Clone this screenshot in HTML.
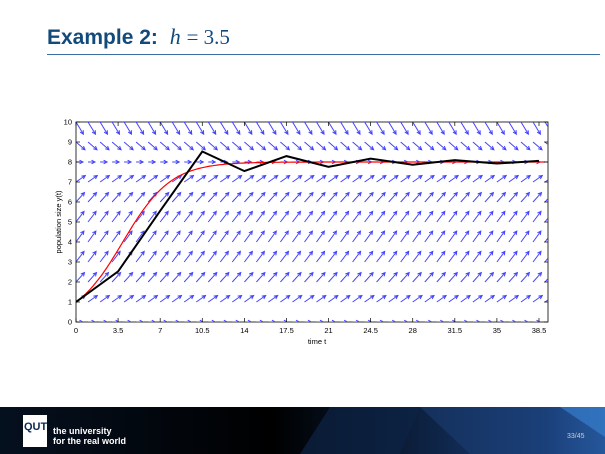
<!DOCTYPE html>
<html><head><meta charset="utf-8"><style>
body{margin:0;width:605px;height:454px;overflow:hidden;background:#fff;font-family:"Liberation Sans",sans-serif;position:relative}
.title{position:absolute;left:47px;top:24px;font-size:21px;font-weight:bold;color:#134a7c}
.title i{font-family:"Liberation Serif",serif;font-weight:normal;font-size:22px;margin-left:6px}
.rule{position:absolute;left:47px;top:54px;width:553px;height:1px;background:#3a6fa0}
.footer{position:absolute;left:0;top:407px;width:605px;height:47px;background:linear-gradient(90deg,#05101f 0%,#000 45%,#0a1a33 65%,#1a3f7a 90%,#2f6fc0 100%);overflow:hidden}
</style></head><body>
<div class="title">Example 2: <i>h</i> <span style="font-family:'Liberation Serif',serif;font-weight:normal">= 3.5</span></div>
<div class="rule"></div>
<svg id="p" width="605" height="454" style="position:absolute;left:0;top:0"></svg>
<div class="footer">
<svg width="605" height="47" style="position:absolute;left:0;top:0">
<polygon points="300,47 330,0 420,0 400,47" fill="#0d2346" opacity="0.7"/>
<polygon points="420,0 605,0 605,47 470,47" fill="#1b3f78" opacity="0.5"/>
<polygon points="560,0 605,0 605,30" fill="#3a86d6" opacity="0.6"/>
<rect x="23" y="8" width="24" height="32" fill="#fff"/>
<text x="24" y="23" font-size="11" font-weight="bold" fill="#0a2a55" font-family="Liberation Sans">QUT</text>
<text x="53" y="27" font-size="9" font-weight="bold" fill="#fff" font-family="Liberation Sans">the university</text>
<text x="53" y="37" font-size="9" font-weight="bold" fill="#fff" font-family="Liberation Sans">for the real world</text>
<text x="567" y="31" font-size="7" fill="#ccc" font-family="Liberation Sans">33/45</text>
</svg></div>
<script>
var s=document.getElementById('p'),h='';
var X0=76,X1=548,Y0=322,Y1=122,sx=(539-76)/38.5,sy=20;
function X(t){return X0+t*sx}function Y(y){return Y0-y*sy}
function f(y){return 0.5*y*(1-y/8)}
h+='<defs><clipPath id="c"><rect x="76" y="122" width="472" height="200"/></clipPath></defs>';
h+='<rect x="76" y="122" width="472" height="200" fill="#fff" stroke="#000" stroke-width="0.8"/>';
var a='';
for(var t=0;t<=39.5;t+=1)for(var y=0;y<=10;y+=1){
 var fv=f(y),af=Math.abs(fv),ratio=1.8*af/(1+0.3*af),len=7+6.5*Math.sqrt(af);
 var ang=Math.atan(ratio),ux=Math.cos(ang),uy=-Math.sin(ang)*(fv<0?-1:1);
 var x0=X(t),y0=Y(y),x1=x0+ux*len,y1=y0+uy*len;
 a+='M'+x0.toFixed(1)+' '+y0.toFixed(1)+'L'+x1.toFixed(1)+' '+y1.toFixed(1);
 var px=-uy,py=ux;
 a+='M'+(x1-ux*3.5+px*1.8).toFixed(1)+' '+(y1-uy*3.5+py*1.8).toFixed(1)+'L'+x1.toFixed(1)+' '+y1.toFixed(1)+'L'+(x1-ux*3.5-px*1.8).toFixed(1)+' '+(y1-uy*3.5-py*1.8).toFixed(1);
}
h+='<path d="'+a+'" stroke="#4444ff" stroke-width="1" fill="none" clip-path="url(#c)"/>';
var r='';for(var t=0;t<=39.2;t+=0.2){var v=8/(1+7*Math.exp(-0.5*t));r+=(t?'L':'M')+X(t).toFixed(1)+' '+Y(v).toFixed(1)}
h+='<path d="'+r+'" stroke="#f00" stroke-width="1.2" fill="none"/>';
var e='',v=1;for(var i=0;i<=11;i++){var t=i*3.5;if(t>39.2)break;e+=(i?'L':'M')+X(t).toFixed(1)+' '+Y(v).toFixed(1);v=v+3.5*f(v)}
h+='<path d="'+e+'" stroke="#000" stroke-width="2" fill="none" clip-path="url(#c)"/>';
var tk='';
for(var i=0;i<=11;i++){var t=i*3.5,x=X(t);tk+='<line x1="'+x+'" y1="322" x2="'+x+'" y2="318" stroke="#000" stroke-width="0.7"/><line x1="'+x+'" y1="122" x2="'+x+'" y2="126" stroke="#000" stroke-width="0.7"/>';
 tk+='<text x="'+x+'" y="333" font-size="7.5" text-anchor="middle">'+(t%1?t.toFixed(1):t)+'</text>'}
for(var y=0;y<=10;y++){var yy=Y(y);tk+='<line x1="76" y1="'+yy+'" x2="80" y2="'+yy+'" stroke="#000" stroke-width="0.7"/><line x1="548" y1="'+yy+'" x2="544" y2="'+yy+'" stroke="#000" stroke-width="0.7"/><text x="72" y="'+(yy+2.5)+'" font-size="7.5" text-anchor="end">'+y+'</text>'}
tk+='<text x="317" y="344" font-size="7.5" text-anchor="middle">time t</text>';
tk+='<text transform="translate(61,222) rotate(-90)" font-size="7.5" text-anchor="middle">population size y(t)</text>';
h+='<g font-family="Liberation Sans">'+tk+'</g>';
s.innerHTML=h;
</script>
</body></html>
